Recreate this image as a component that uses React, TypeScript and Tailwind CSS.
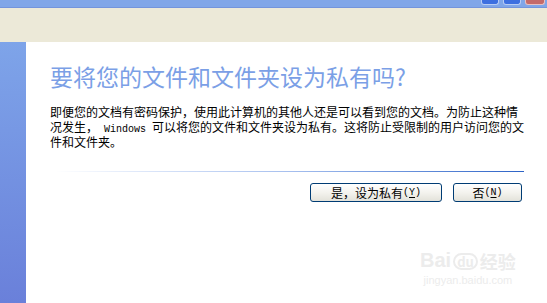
import React from 'react'

const font = { fontFamily: '"Noto Sans CJK SC", "Noto Sans", sans-serif' }
const mono = { fontFamily: '"Liberation Mono", "DejaVu Sans Mono", monospace' }

const XpButton: React.FC<{ label: string; hotkey: string; width: string }> = ({ label, hotkey, width }) => (
  <button
    className={`${width} h-[19px] rounded-[3px] border border-[#003c74] bg-gradient-to-b from-[#ffffff] via-[#f4f3ee] to-[#e3e2da] text-[12px] leading-[17px] text-black flex items-center justify-center`}
    style={font}
  >
    {label}
    <span className="text-[10px]" style={mono}>
      (<span className="underline underline-offset-2">{hotkey}</span>)
    </span>
  </button>
)

export default function App() {
  return (
    <div className="relative w-[547px] h-[303px] overflow-hidden flex flex-col bg-white" style={font}>
      {/* title bar remnant */}
      <div className="h-[8px] bg-[#80a6e8] border-b border-[#7394dc] flex justify-end items-start pr-[2px] gap-[4px]">
        <div className="w-[18px] h-[5px] rounded-b-[3px] bg-[#3d6fe0] border border-t-0 border-[#b8ccf4] ml-auto" />
        <div className="w-[18px] h-[5px] rounded-b-[3px] bg-[#3d6fe0] border border-t-0 border-[#b8ccf4]" />
        <div className="w-[20px] h-[5px] rounded-b-[3px] bg-[#c46a6a] border border-t-0 border-[#e8c0c0]" />
      </div>

      {/* beige strip */}
      <div className="h-[34px] bg-[#ece9d8]" />

      <div className="flex-1 flex">
        <div className="w-[26px] bg-gradient-to-b from-[#7ea4e9] to-[#6a80da]" />
        <div className="flex-1 flex flex-col pl-[24px] pt-[22px]">
          <div className="text-[23px] leading-[24px] text-[#7b9fe6] whitespace-nowrap">
            要将您的文件和文件夹设为私有吗?
          </div>
          <div className="mt-[16px] flex flex-col text-[12px] leading-[15px] text-black whitespace-nowrap">
            <div className="h-[15px] overflow-hidden">即便您的文档有密码保护，使用此计算机的其他人还是可以看到您的文档。为防止这种情</div>
            <div className="h-[15px] overflow-hidden">
              况发生，<span className="text-[10px] whitespace-pre" style={mono}> Windows </span>可以将您的文件和文件夹设为私有。这将防止受限制的用户访问您的文
            </div>
            <div className="h-[15px] overflow-hidden">件和文件夹。</div>
          </div>
          <div className="mt-[22px] ml-[5px] w-[469px] h-px bg-gradient-to-r from-[#ffffff] via-[#a6bfee] to-[#2c62c6]" />
          <div className="mt-[11px] flex justify-end gap-[11px] pr-[25px]">
            <XpButton label="是，设为私有" hotkey="Y" width="w-[132px]" />
            <XpButton label="否" hotkey="N" width="w-[69px]" />
          </div>
        </div>
      </div>

      {/* watermark */}
      <div className="absolute left-[420px] top-[250px] flex flex-col items-center text-[#ececec] pointer-events-none">
        <div className="flex items-end gap-[2px] leading-none">
          <span className="text-[20px] font-bold" style={{ fontFamily: 'Arial, "Liberation Sans", sans-serif' }}>Bai</span>
          <span className="text-[13px] font-bold border-2 border-[#ececec] rounded-full px-[2px]">du</span>
          <span className="text-[18px] font-bold">经验</span>
        </div>
        <div className="text-[11px] mt-[2px]" style={{ fontFamily: 'Arial, "Liberation Sans", sans-serif' }}>jingyan.baidu.com</div>
      </div>
    </div>
  )
}
